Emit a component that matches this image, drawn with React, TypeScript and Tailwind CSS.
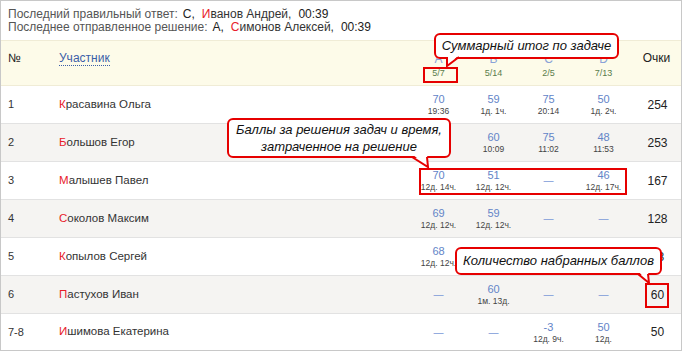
import React from 'react';

type Cell = [string, string] | null;

interface Row {
  rank: string;
  name: string;
  cells: Cell[];
  points: number;
}

const problems = [
  { letter: 'A', total: '5/7' },
  { letter: 'B', total: '5/14' },
  { letter: 'C', total: '2/5' },
  { letter: 'D', total: '7/13' },
];

const rows: Row[] = [
  { rank: '1', name: 'Красавина Ольга', cells: [['70', '19:36'], ['59', '1д. 1ч.'], ['75', '20:14'], ['50', '1д. 2ч.']], points: 254 },
  { rank: '2', name: 'Большов Егор', cells: [['70', '09:41'], ['60', '10:09'], ['75', '11:02'], ['48', '11:53']], points: 253 },
  { rank: '3', name: 'Малышев Павел', cells: [['70', '12д. 14ч.'], ['51', '12д. 12ч.'], null, ['46', '12д. 17ч.']], points: 167 },
  { rank: '4', name: 'Соколов Максим', cells: [['69', '12д. 12ч.'], ['59', '12д. 12ч.'], null, null], points: 128 },
  { rank: '5', name: 'Копылов Сергей', cells: [['68', '12д. 12ч.'], null, null, null], points: 68 },
  { rank: '6', name: 'Пастухов Иван', cells: [null, ['60', '1м. 13д.'], null, null], points: 60 },
  { rank: '7-8', name: 'Ишимова Екатерина', cells: [null, null, ['-3', '12д. 9ч.'], ['50', '12д.']], points: 50 },
];

const cols = 'grid grid-cols-[58px_352px_55px_55px_55px_55px_51px]';

function Name({ text }: { text: string }) {
  return (
    <span className="text-[#333]">
      <span className="text-[#e8202a]">{text[0]}</span>
      {text.slice(1)}
    </span>
  );
}

function ScoreCell({ cell }: { cell: Cell }) {
  if (!cell) {
    return <div className="flex justify-center text-[10px] leading-[13px] text-[#7b98d8]">—</div>;
  }
  return (
    <div className="flex flex-col items-center">
      <span className="text-[11px] leading-[13px] text-[#6384c8]">{cell[0]}</span>
      <span className="text-[8.5px] leading-[10px] text-[#444]">{cell[1]}</span>
    </div>
  );
}

export default function App() {
  return (
    <div className="relative w-[683px] h-[352px] bg-white font-['Liberation_Sans',Arial,sans-serif]">
      <div className="w-[682px] h-[351px] border border-[#c8c8c8] overflow-hidden">
        {/* ─── last answers ─── */}
        <div className="h-[39px] pt-[7px] pl-[7px] text-[12px] leading-[13px] text-[#555]">
          <div>
            Последний правильный ответ:
            <span className="ml-[5px] text-[#222]">С,</span>
            <span className="ml-[7px] text-[#222]"><Name text="Иванов Андрей," /></span>
            <span className="ml-[7px] text-[#222]">00:39</span>
          </div>
          <div>
            Последнее отправленное решение:
            <span className="ml-[5px] text-[#222]">А,</span>
            <span className="ml-[7px] text-[#222]"><Name text="Симонов Алексей," /></span>
            <span className="ml-[7px] text-[#222]">00:39</span>
          </div>
        </div>

        {/* ─── header ─── */}
        <div className={`${cols} h-[46px] bg-[#fdfbe9] border-t border-b border-[#f0ecd6] text-[12px] leading-[14px]`}>
          <div className="pl-[7px] pt-[10px] text-[#222]">№</div>
          <div className="pt-[10px]">
            <span className="text-[#3b5ea8] border-b border-dotted border-[#3b5ea8]">Участник</span>
          </div>
          {problems.map(p => (
            <div key={p.letter} className="flex flex-col items-center pt-[11px]">
              <span className="text-[12px] leading-[14px] text-[#8aa2d8]">{p.letter}</span>
              <span className="mt-[1px] text-[9px] leading-[12px] text-[#5a7d4c]">{p.total}</span>
            </div>
          ))}
          <div className="flex justify-center pt-[10px] text-[#222]">Очки</div>
        </div>

        {/* ─── rows ─── */}
        {rows.map((r, i) => (
          <div
            key={r.rank}
            className={`${cols} items-center ${i === rows.length - 1 ? 'h-[36px]' : 'h-[38px] border-b border-[#e2e2e2]'} ${
              i % 2 === 1 ? 'bg-[#f5f4f2]' : 'bg-white'
            }`}
          >
            <div className="pl-[7px] text-[11px] text-[#333]">{r.rank}</div>
            <div className="text-[11.5px]">
              <Name text={r.name} />
            </div>
            {r.cells.map((c, j) => (
              <ScoreCell key={j} cell={c} />
            ))}
            <div className="flex justify-center pl-[2px] text-[12px] text-[#222]">{r.points}</div>
          </div>
        ))}
      </div>

      {/* ─── highlight frames ─── */}
      <div className="absolute left-[423px] top-[67px] w-[35px] h-[16px] border-2 border-[#e60000]" />
      <div className="absolute left-[419px] top-[168px] w-[208px] h-[27px] border-2 border-[#e60000]" />
      <div className="absolute left-[645px] top-[283px] w-[24px] h-[25px] border-2 border-[#e60000]" />

      {/* ─── callouts ─── */}
      <div className="absolute left-[434px] top-[33px] w-[185px] h-[26px] rounded-[6px] border-2 border-[#e60000] bg-white flex items-center justify-center whitespace-nowrap italic text-[13px] text-[#111]">
        Суммарный итог по задаче
      </div>
      <div className="absolute left-[227px] top-[118px] w-[224px] h-[40px] rounded-[6px] border-2 border-[#e60000] bg-white flex flex-col items-center justify-center whitespace-nowrap italic text-[13px] leading-[17px] text-[#111]">
        <span>Баллы за решения задач и время,</span>
        <span>затраченное на решение</span>
      </div>
      <div className="absolute left-[455px] top-[247px] w-[207px] h-[28px] rounded-[6px] border-2 border-[#e60000] bg-white flex items-center justify-center whitespace-nowrap italic text-[13px] text-[#111]">
        Количество набранных баллов
      </div>

      <svg className="absolute left-0 top-0 pointer-events-none" width="683" height="352" viewBox="0 0 683 352">
        <g fill="white" stroke="none">
          <polygon points="447,55 447,66 459,55" />
          <polygon points="412,154 428,167 427,154" />
          <polygon points="638,271 649,283 648,271" />
        </g>
        <g fill="none" stroke="#e60000" strokeWidth="2" strokeLinejoin="miter">
          <polyline points="447,57 447,66 459,57" />
          <polyline points="412,157 428,167 427,157" />
          <polyline points="638,274 649,283 648,274" />
        </g>
      </svg>
    </div>
  );
}
